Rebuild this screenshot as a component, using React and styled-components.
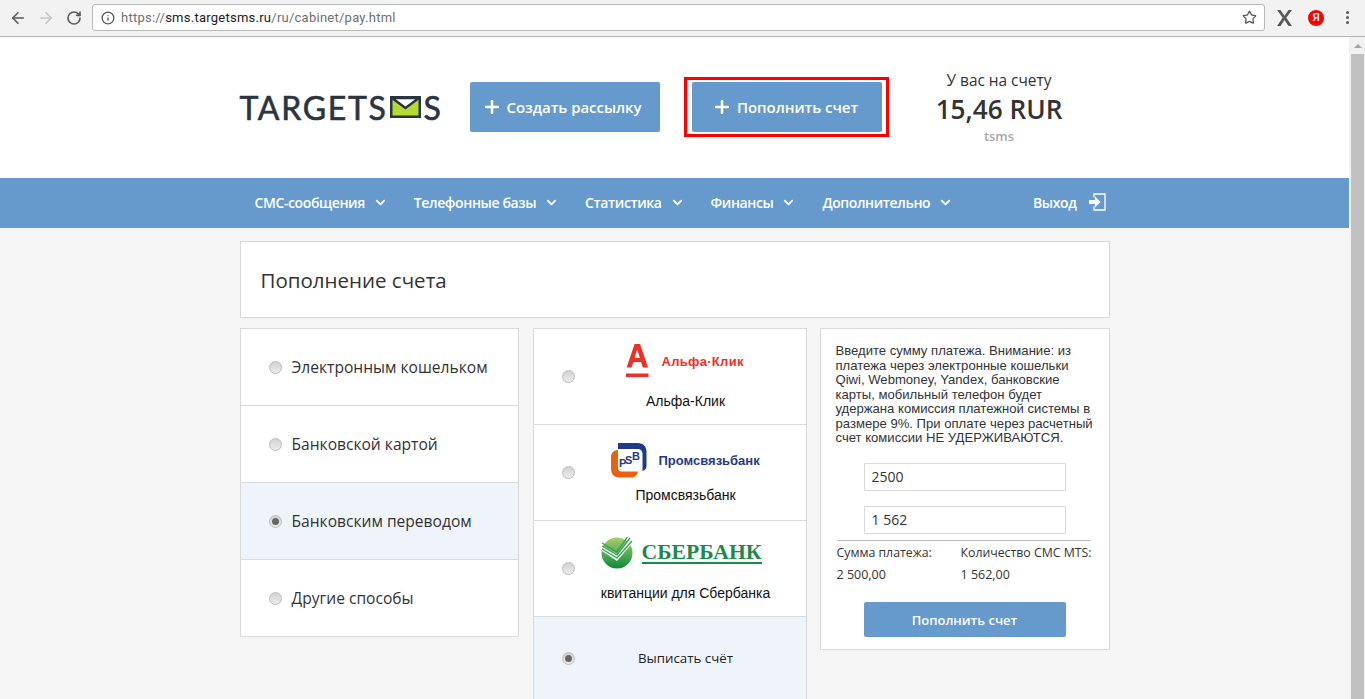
import React from 'react';
import styled, { createGlobalStyle } from 'styled-components';
import { ArrowLeft, ArrowRight, RotateCw, Info, Star, ChevronDown, Plus } from 'lucide-react';

const NAV_ITEMS = ['СМС-сообщения', 'Телефонные базы', 'Статистика', 'Финансы', 'Дополнительно'];
const METHODS = ['Электронным кошельком', 'Банковской картой', 'Банковским переводом', 'Другие способы'];

const AlfaLogo = () => (
  <LogoLine $left={92} $height={64}>
    <svg width="23" height="34" viewBox="0 0 23 34">
      <path fill="#ef3124" d="M8.600 0h5.400l8 23.500h-5.200l-1.700-5.400H7.300l-1.800 5.400H.6zM8.600 14h5.300L11.300 5.600h-.1z" />
      <rect x="0" y="29.500" width="22.500" height="3.500" fill="#ef3124" />
    </svg>
    <AlfaName>Альфа·Клик</AlfaName>
  </LogoLine>
);

const PsbLogo = () => (
  <LogoLine $left={77} $height={62} $pad={9}>
    <svg width="36" height="35" viewBox="0 0 36 35">
      <path fill="#1f3a87" d="M7 0h20c5 0 8.500 3.500 8.500 8.500V23c0 2.500-1.500 4.500-4 5V11c0-3-2-5-5-5H7z" />
      <path fill="#e5640f" d="M7 7v18c0 2 1.500 3.500 3.500 3.500H27c-.5 3.500-3 6-6.500 6H8.500C3.500 34.500 0 31 0 26V14c0-4 3-7 7-7z" />
      <text x="8" y="24" fontFamily="Liberation Sans" fontSize="11" fontWeight="700" fill="#1f3a87">P</text>
      <text x="14" y="21" fontFamily="Liberation Sans" fontSize="11" fontWeight="700" fill="#1f3a87">S</text>
      <text x="21" y="17" fontFamily="Liberation Sans" fontSize="11" fontWeight="700" fill="#1f3a87">B</text>
    </svg>
    <PsbName>Промсвязьбанк</PsbName>
  </LogoLine>
);

const SberLogo = () => (
  <LogoLine $left={67} $height={64}>
    <svg width="33" height="32" viewBox="0 0 33 32">
      <defs>
        <linearGradient id="sber" x1="0" y1="0" x2="0" y2="1">
          <stop offset="0" stopColor="#a9d06a" />
          <stop offset="1" stopColor="#0c8a3e" />
        </linearGradient>
      </defs>
      <circle cx="16" cy="16" r="15.500" fill="url(#sber)" />
      <path d="M0 8l16 9L30-1l3 5-17 20L-2 12z" fill="#fff" opacity=".95" />
      <path d="M1 9l15 9L29 1M1 12l15 9L31 4M1 6l15 9L27-1" fill="none" stroke="#2f9e50" strokeWidth="1.300" />
    </svg>
    <SberName>СБЕРБАНК</SberName>
  </LogoLine>
);

const BANKS = [
  { id: 'alfa', logo: <AlfaLogo />, label: 'Альфа-Клик' },
  { id: 'psb', logo: <PsbLogo />, label: 'Промсвязьбанк' },
  { id: 'sber', logo: <SberLogo />, label: 'квитанции для Сбербанка' },
];

const App = () => (
  <Window>
    <GlobalStyle />
    <Toolbar>
      <ToolIcon><ArrowLeft size={18} strokeWidth={2.2} /></ToolIcon>
      <ToolIcon $muted><ArrowRight size={18} strokeWidth={2.2} /></ToolIcon>
      <ToolIcon><RotateCw size={16} strokeWidth={2.4} /></ToolIcon>
      <UrlBar>
        <Info size={14} color="#555" strokeWidth={2.2} />
        <Url>
          https://<b>sms.targetsms.ru</b>/ru/cabinet/pay.html
        </Url>
        <Star size={15} color="#555" strokeWidth={2} />
      </UrlBar>
      <Extensions>
        <svg width="15" height="16" viewBox="0 0 15 16">
          <path fill="#595959" d="M0 0h3.500l4 5.800L11.500 0H15L9.300 7.800 15 16h-3.500l-4-5.900L3.500 16H0l5.700-8.200z" />
        </svg>
        <YandexBadge>Я</YandexBadge>
        <MenuDots><i /><i /><i /></MenuDots>
      </Extensions>
    </Toolbar>

    <Viewport>
      <Page>
        <Header>
          <Wrap>
            <Logo>
              TARGETS
              <svg width="31" height="22" viewBox="0 0 31 22">
                <rect x="1.250" y="1.250" width="28.500" height="19.500" fill="#b5d935" stroke="#2b3441" strokeWidth="2.500" />
                <path d="M2 2l13.500 10L29 2z" fill="#fff" stroke="#2b3441" strokeWidth="2.500" strokeLinejoin="miter" />
              </svg>
              S
            </Logo>
            <ActionButton><Plus size={20} strokeWidth={3} />Создать рассылку</ActionButton>
            <Highlight>
              <ActionButton $centered><Plus size={20} strokeWidth={3} />Пополнить счет</ActionButton>
            </Highlight>
            <Balance>
              <BalanceTitle>У вас на счету</BalanceTitle>
              <BalanceSum>15,46 RUR</BalanceSum>
              <BalanceUnit>tsms</BalanceUnit>
            </Balance>
          </Wrap>
        </Header>

        <Nav>
          <NavWrap>
            {NAV_ITEMS.map((item) => (
              <NavItem key={item}>
                {item}
                <ChevronDown size={15} strokeWidth={3} />
              </NavItem>
            ))}
            <Logout>
              Выход
              <svg width="18" height="18" viewBox="0 0 18 18">
                <path d="M6 4.500V1h11v16H6v-3.500" fill="none" stroke="#fff" strokeWidth="1.300" />
                <path d="M1 7h6V3.500L12.500 9 7 14.500V11H1z" fill="#fff" />
              </svg>
            </Logout>
          </NavWrap>
        </Nav>

        <Content>
          <TitleCard>Пополнение счета</TitleCard>
          <Columns>
            <MethodList>
              {METHODS.map((method, i) => (
                <MethodRow key={method} $active={i === 2}>
                  <Radio $checked={i === 2} />
                  {method}
                </MethodRow>
              ))}
            </MethodList>

            <BankList>
              {BANKS.map((bank) => (
                <BankRow key={bank.id}>
                  <Radio />
                  <BankBody>
                    {bank.logo}
                    <BankLabel>{bank.label}</BankLabel>
                  </BankBody>
                </BankRow>
              ))}
              <InvoiceRow>
                <Radio $checked />
                <InvoiceText>Выписать счёт</InvoiceText>
              </InvoiceRow>
            </BankList>

            <PayCard>
              <Notice>
                Введите сумму платежа. Внимание: из платежа через электронные кошельки Qiwi, Webmoney,
                Yandex, банковские карты, мобильный телефон будет удержана комиссия платежной системы в
                размере 9%. При оплате через расчетный счет комиссии НЕ УДЕРЖИВАЮТСЯ.
              </Notice>
              <AmountInput defaultValue="2500" />
              <AmountInput defaultValue="1 562" />
              <Totals>
                <Total>
                  <span>Сумма платежа:</span>
                  <b>2 500,00</b>
                </Total>
                <Total>
                  <span>Количество СМС MTS:</span>
                  <b>1 562,00</b>
                </Total>
              </Totals>
              <SubmitButton>Пополнить счет</SubmitButton>
            </PayCard>
          </Columns>
        </Content>
      </Page>
      <Scrollbar>
        <ScrollArrow />
        <ScrollThumb />
      </Scrollbar>
    </Viewport>
  </Window>
);

const GlobalStyle = createGlobalStyle`
  html, body {
    margin: 0;
    height: 100%;
    overflow: hidden;
  }
  * {
    box-sizing: border-box;
  }
  body {
    font-family: "Open Sans", sans-serif;
    color: #333;
  }
`;

const Window = styled.div`
  display: flex;
  flex-direction: column;
  height: 699px;
`;

const Toolbar = styled.div`
  flex: none;
  display: flex;
  align-items: center;
  height: 37px;
  padding: 0 0 1px 9px;
  background: #f2f2f2;
  border-bottom: 1px solid #b4b4b4;
`;

const ToolIcon = styled.span`
  display: flex;
  justify-content: center;
  width: 18px;
  margin-right: 10px;
  color: ${(p) => (p.$muted ? '#c6c6c6' : '#5a5a5a')};
`;

const UrlBar = styled.div`
  display: flex;
  align-items: center;
  width: 1173px;
  height: 27px;
  margin-left: -1px;
  padding: 0 7px 0 8px;
  background: #fff;
  border: 1px solid #b9b9b9;
  border-radius: 3px;
`;

const Url = styled.span`
  flex: 1;
  margin-left: 6px;
  font: 13px "Roboto", sans-serif;
  letter-spacing: 0.25px;
  color: #6e6e6e;

  b {
    font-weight: 400;
    color: #1a1a1a;
  }
`;

const Extensions = styled.div`
  display: flex;
  align-items: center;
  margin-left: 12px;
`;

const YandexBadge = styled.span`
  display: flex;
  align-items: center;
  justify-content: center;
  width: 16px;
  height: 16px;
  margin-left: 16px;
  border-radius: 50%;
  background: #f00;
  color: #fff;
  font: 700 10px "Liberation Sans", sans-serif;
`;

const MenuDots = styled.span`
  display: flex;
  flex-direction: column;
  gap: 2px;
  margin-left: 22px;

  i {
    display: block;
    width: 3px;
    height: 3px;
    border-radius: 50%;
    background: #5a5a5a;
  }
`;

const Viewport = styled.div`
  flex: 1;
  display: flex;
  min-height: 0;
`;

const Page = styled.div`
  flex: 1;
  min-width: 0;
  overflow: hidden;
  background: #f5f5f5;
`;

const Scrollbar = styled.div`
  flex: none;
  display: flex;
  flex-direction: column;
  align-items: center;
  width: 16px;
  padding: 0 1px 0 2px;
  background: #f1f1f1;
`;

const ScrollArrow = styled.span`
  margin: 7px 0 6px;
  border: 4px solid transparent;
  border-top: 0;
  border-bottom: 4px solid #a3a3a3;
`;

const ScrollThumb = styled.div`
  flex: 1;
  width: 100%;
  background: #c1c1c1;
`;

const Header = styled.header`
  height: 141px;
  padding-bottom: 1px;
  background: #fff;
`;

const Wrap = styled.div`
  display: flex;
  align-items: center;
  width: 870px;
  height: 100%;
  margin: 0 auto;
`;

const Logo = styled.div`
  display: flex;
  align-items: center;
  width: 230px;
  font: 400 32px "Lato", sans-serif;
  -webkit-text-stroke: 0.6px #2b3441;
  letter-spacing: 1.700px;
  color: #2b3441;

  svg {
    flex: none;
    margin: 0 3px 0 2px;
  }
`;

const ActionButton = styled.a`
  display: flex;
  align-items: center;
  justify-content: ${(p) => (p.$centered ? 'center' : 'flex-start')};
  gap: 5px;
  width: 190px;
  height: 50px;
  padding-left: ${(p) => (p.$centered ? '0' : '12px')};
  padding-right: ${(p) => (p.$centered ? '3px' : '0')};
  padding-bottom: 1px;
  border-radius: 2px;
  background: #6699cc;
  color: #fff;
  font-size: 15px;
  font-weight: 600;
  letter-spacing: -0.05px;
`;

const Highlight = styled.div`
  margin-left: 24px;
  padding: 2px 4px 2px 5px;
  border: 3px solid #f00;
`;

const Balance = styled.div`
  display: flex;
  flex-direction: column;
  align-items: center;
  width: 221px;
  padding-top: 2px;
`;

const BalanceTitle = styled.div`
  font-size: 15.400px;
  line-height: 20px;
`;

const BalanceSum = styled.div`
  font-size: 26.200px;
  font-weight: 600;
  line-height: 36px;
`;

const BalanceUnit = styled.div`
  font-size: 13px;
  font-weight: 600;
  line-height: 18px;
  color: #a9a9a9;
`;

const Nav = styled.nav`
  height: 50px;
  background: #6699cc;
`;

const NavWrap = styled(Wrap)`
  padding: 0 4px 2px 15px;
`;

const NavItem = styled.a`
  display: flex;
  align-items: center;
  gap: 8px;
  margin-right: 26px;
  color: #fff;
  font-size: 14px;
  font-weight: 600;
  letter-spacing: -0.4px;
`;

const Logout = styled(NavItem)`
  gap: 11px;
  margin: 0 0 0 auto;
`;

const Content = styled.main`
  width: 870px;
  margin: 13px auto 0;
`;

const TitleCard = styled.h1`
  display: flex;
  align-items: center;
  height: 77px;
  margin: 0 0 10px;
  padding: 1px 0 0 20px;
  background: #fff;
  border: 1px solid #d9d9d9;
  font-size: 20.500px;
  font-weight: 400;
`;

const Columns = styled.div`
  display: flex;
  align-items: flex-start;
`;

const MethodList = styled.div`
  width: 279px;
  margin-right: 14px;
  background: #fff;
  border: 1px solid #d9d9d9;
`;

const MethodRow = styled.div`
  display: flex;
  align-items: center;
  gap: 10px;
  height: 77px;
  padding: 0 0 0 28px;
  background: ${(p) => (p.$active ? '#eff3fa' : '#fff')};
  font-size: 15.600px;
  border-bottom: 1px solid #d9d9d9;

  &:last-child {
    height: 76px;
    border-bottom: 0;
  }
`;

const Radio = styled.span`
  flex: none;
  position: relative;
  width: 13px;
  height: 13px;
  border-radius: 50%;
  border: 1px solid #bdbdbd;
  background: linear-gradient(#d2d2d2, #ececec);

  &::after {
    content: '';
    display: ${(p) => (p.$checked ? 'block' : 'none')};
    position: absolute;
    inset: 2px;
    border-radius: 50%;
    background: #666;
  }
`;

const BankList = styled.div`
  width: 274px;
  height: 371px;
  margin-right: 13px;
  background: #fff;
  border: 1px solid #d9d9d9;
  border-bottom: 0;
`;

const BankRow = styled.div`
  display: flex;
  align-items: center;
  height: 96px;
  padding-left: 28px;
  border-bottom: 1px solid #d9d9d9;
`;

const BankBody = styled.div`
  flex: 1;
  align-self: stretch;
  display: flex;
  flex-direction: column;
  padding-right: 9px;
`;

const LogoLine = styled.div`
  display: flex;
  align-items: center;
  height: ${(p) => p.$height}px;
  margin-left: ${(p) => p.$left - 41}px;
  padding-top: ${(p) => p.$pad || 0}px;
`;

const AlfaName = styled.span`
  margin-left: 13px;
  padding-top: 1px;
  font: 700 13px "Liberation Sans", sans-serif;
  letter-spacing: 0.300px;
  color: #ef3124;
`;

const PsbName = styled.span`
  margin-left: 12px;
  font: 700 13px "Liberation Sans", sans-serif;
  color: #1f3a87;
`;

const SberName = styled.span`
  margin-left: 8px;
  border-bottom: 2px solid #1d8a4c;
  font: 700 21.700px/20px "Liberation Serif", serif;
  color: #1d8a4c;
`;

const BankLabel = styled.div`
  font: 14px/16px "Liberation Sans", sans-serif;
  text-align: center;
  color: #111;
`;

const InvoiceRow = styled.div`
  display: flex;
  align-items: center;
  height: 82px;
  padding-left: 28px;
  background: #eff3fa;
`;

const InvoiceText = styled.div`
  flex: 1;
  padding-right: 9px;
  font-size: 13.300px;
  font-weight: 500;
  text-align: center;
  color: #222;
`;

const PayCard = styled.div`
  display: flex;
  flex-direction: column;
  align-items: center;
  width: 290px;
  height: 322px;
  padding: 15px 15px 0;
  background: #fff;
  border: 1px solid #d9d9d9;
`;

const Notice = styled.p`
  align-self: stretch;
  height: 104px;
  margin: 0 -2px 15px 0;
  font: 13.100px/14.500px "Liberation Sans", sans-serif;
  color: #333;
`;

const AmountInput = styled.input`
  width: 202px;
  height: 28px;
  margin-bottom: 15px;
  padding: 0 7px 2px;
  border: 1px solid #d9d9d9;
  border-radius: 1px;
  outline: 0;
  background: #fff;
  color: #333;
  font: 14px "Open Sans", sans-serif;
`;

const Totals = styled.div`
  align-self: stretch;
  display: flex;
  margin: -9px 3px 0 1px;
  padding-top: 4px;
  border-top: 1px solid #bdbdbd;
`;

const Total = styled.div`
  display: flex;
  flex-direction: column;
  flex: none;
  width: 124px;
  font-size: 12.300px;
  line-height: 16px;
  white-space: nowrap;

  span {
    margin-bottom: 6px;
  }

  b {
    font-size: 12.500px;
    font-weight: 500;
  }
`;

const SubmitButton = styled.a`
  display: flex;
  align-items: center;
  justify-content: center;
  width: 202px;
  height: 35px;
  margin-top: 19px;
  border-radius: 2px;
  background: #6699cc;
  color: #fff;
  font-size: 13px;
  font-weight: 600;
`;

export default App;
